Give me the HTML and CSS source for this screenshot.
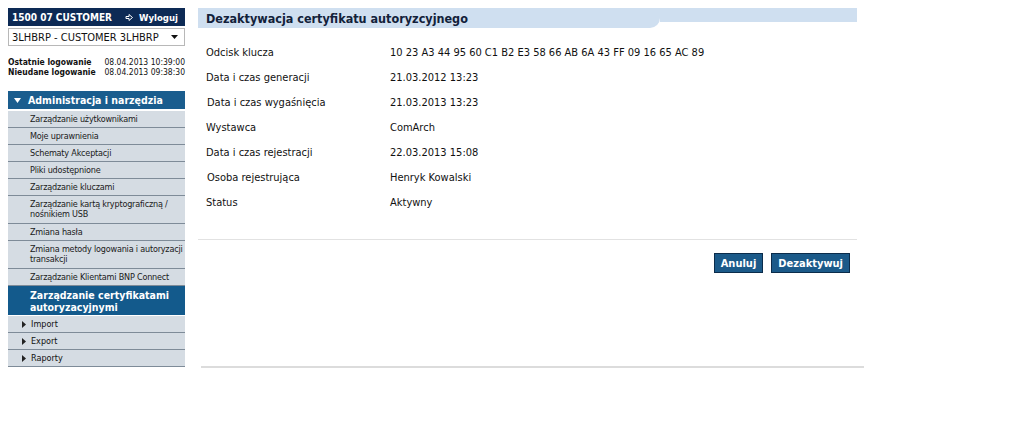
FILE: index.html
```html
<!DOCTYPE html>
<html lang="pl">
<head>
<meta charset="utf-8">
<title>Dezaktywacja certyfikatu</title>
<link rel="stylesheet" href="styles.css">
</head>
<body>
<div class="page">
  <aside class="sidebar">
    <div class="user-bar">
      <span class="user-name">1500 07 CUSTOMER</span>
      <span class="logout"><svg class="logout-icon" width="9" height="9" viewBox="0 0 9 9"><path d="M1 3.5h3V1.5l3.5 3-3.5 3V5.5H1z" fill="none" stroke="#ffffff" stroke-width="1"/></svg>Wyloguj</span>
    </div>
    <div class="select">
      <span>3LHBRP - CUSTOMER 3LHBRP</span>
      <svg width="7" height="4" viewBox="0 0 7 4"><path d="M0 0h7L3.5 4z" fill="#111"/></svg>
    </div>
    <div class="logins">
      <div class="login-row"><span class="login-label">Ostatnie logowanie</span><span class="login-date">08.04.2013 10:39:00</span></div>
      <div class="login-row"><span class="login-label">Nieudane logowanie</span><span class="login-date">08.04.2013 09:38:30</span></div>
    </div>
    <nav class="menu">
      <div class="menu-head"><svg class="tri-down" width="7" height="5" viewBox="0 0 7 5"><path d="M0 0h7L3.5 5z" fill="#ffffff"/></svg>Administracja i narzędzia</div>
      <div class="menu-item">Zarządzanie użytkownikami</div>
      <div class="menu-item">Moje uprawnienia</div>
      <div class="menu-item">Schematy Akceptacji</div>
      <div class="menu-item">Pliki udostępnione</div>
      <div class="menu-item">Zarządzanie kluczami</div>
      <div class="menu-item two">Zarządzanie kartą kryptograficzną /<br>nośnikiem USB</div>
      <div class="menu-item">Zmiana hasła</div>
      <div class="menu-item two">Zmiana metody logowania i autoryzacji<br>transakcji</div>
      <div class="menu-item">Zarządzanie Klientami BNP Connect</div>
      <div class="menu-item active">Zarządzanie certyfikatami autoryzacyjnymi</div>
      <div class="menu-group"><svg class="tri-right" width="4" height="7" viewBox="0 0 4 7"><path d="M0 0l4 3.5L0 7z" fill="#222"/></svg>Import</div>
      <div class="menu-group"><svg class="tri-right" width="4" height="7" viewBox="0 0 4 7"><path d="M0 0l4 3.5L0 7z" fill="#222"/></svg>Export</div>
      <div class="menu-group"><svg class="tri-right" width="4" height="7" viewBox="0 0 4 7"><path d="M0 0l4 3.5L0 7z" fill="#222"/></svg>Raporty</div>
    </nav>
  </aside>
  <main class="content">
    <div class="title-bar">
      <h1 class="title">Dezaktywacja certyfikatu autoryzcyjnego</h1>
      <div class="title-tail"></div>
    </div>
    <div class="details">
      <div class="row"><span class="label">Odcisk klucza</span><span class="value">10 23 A3 44 95 60 C1 B2 E3 58 66 AB 6A 43 FF 09 16 65 AC 89</span></div>
      <div class="row"><span class="label">Data i czas generacji</span><span class="value">21.03.2012 13:23</span></div>
      <div class="row"><span class="label shift">Data i czas wygaśnięcia</span><span class="value">21.03.2013 13:23</span></div>
      <div class="row"><span class="label">Wystawca</span><span class="value">ComArch</span></div>
      <div class="row"><span class="label">Data i czas rejestracji</span><span class="value">22.03.2013 15:08</span></div>
      <div class="row"><span class="label shift">Osoba rejestrująca</span><span class="value">Henryk Kowalski</span></div>
      <div class="row"><span class="label">Status</span><span class="value">Aktywny</span></div>
    </div>
    <div class="actions">
      <button class="btn">Anuluj</button>
      <button class="btn">Dezaktywuj</button>
    </div>
    <div class="bottom-line"></div>
  </main>
</div>
</body>
</html>
```
FILE: styles.css
```css
* { box-sizing: border-box; }
body {
  margin: 8px;
  background: #ffffff;
  font-family: "DejaVu Sans Condensed", "Liberation Sans", sans-serif;
  color: #111;
}
.page {
  display: flex;
  gap: 13px;
  align-items: flex-start;
}
.sidebar {
  width: 177px;
  flex: none;
}
.user-bar {
  height: 18px;
  background: #0d2a55;
  color: #fff;
  display: flex;
  justify-content: space-between;
  align-items: center;
  padding: 0 7px 0 4px;
  font-size: 10px;
  font-weight: bold;
}
.logout { display: flex; align-items: center; gap: 5px; font-size: 9.5px; }
.select {
  margin-top: 2px;
  height: 18px;
  border: 1px solid #b8b8b8;
  display: flex;
  justify-content: space-between;
  align-items: center;
  padding: 0 6px 0 3px;
  font-size: 11px;
  color: #111;
}
.logins {
  margin-top: 11px;
}
.login-row {
  display: flex;
  justify-content: space-between;
  font-size: 8.5px;
  line-height: 10px;
}
.login-label { font-weight: bold; }
.menu { margin-top: 14px; }
.menu-head {
  height: 20px;
  background: #1a5d8e;
  color: #fff;
  font-weight: bold;
  font-size: 10.5px;
  display: flex;
  align-items: center;
  gap: 7px;
  padding-left: 6px;
  border-bottom: 2px solid #ffffff;
}
.menu-item {
  background: #d5dce3;
  font-size: 9px;
  letter-spacing: -0.2px;
  line-height: 10px;
  padding: 3px 2px 3px 22px;
  min-height: 17px;
  border-bottom: 1px solid #7e8b98;
  color: #1a1a1a;
  white-space: nowrap;
}
.menu-item.two { padding-bottom: 4px; }
.menu-item.active {
  background: #135a8c;
  color: #fff;
  font-weight: bold;
  font-size: 10.5px;
  letter-spacing: 0;
  line-height: 12px;
  padding-top: 3px;
  padding-bottom: 2px;
  min-height: 30px;
  border-bottom: 1px solid #ffffff;
  white-space: normal;
}
.menu-group {
  background: #d5dce3;
  font-size: 9px;
  height: 17px;
  display: flex;
  align-items: center;
  gap: 5px;
  padding-left: 14px;
  border-bottom: 1px solid #7e8b98;
}
.content {
  width: 666px;
  display: flex;
  flex-direction: column;
}
.title-bar {
  display: flex;
  align-items: flex-start;
  width: 659px;
}
.title {
  margin: 0;
  width: 462px;
  height: 20px;
  background: #cfdff0;
  border-bottom-right-radius: 10px;
  font-size: 12.5px;
  font-weight: bold;
  color: #12213a;
  padding: 3px 0 0 8px;
}
.title-tail {
  flex: 1;
  height: 14px;
  background: #cfdff0;
}
.details {
  padding: 12px 0 24px 8px;
  border-bottom: 1px solid #e2e2e2;
  width: 659px;
}
.row {
  display: flex;
  height: 25px;
  align-items: center;
  font-size: 11px;
}
.label { width: 184px; flex: none; }
.label.shift { padding-left: 1px; }
.actions {
  display: flex;
  justify-content: flex-end;
  gap: 8px;
  width: 659px;
  padding: 13px 7px 0 0;
}
.btn {
  font-family: inherit;
  height: 20px;
  background: #1b5a89;
  border: 1px solid #0b2c4b;
  color: #fff;
  font-weight: bold;
  font-size: 11px;
  padding: 0 6px;
  border-radius: 0;
}
.bottom-line {
  margin-top: 93px;
  margin-left: 3px;
  height: 2px;
  width: 663px;
  background: #dcdcdc;
}
```
